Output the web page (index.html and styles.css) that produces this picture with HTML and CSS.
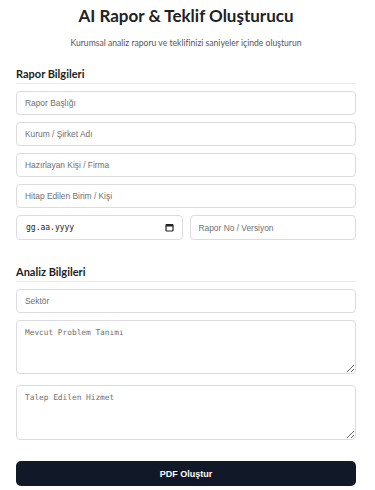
FILE: index.html
```html
<!DOCTYPE html>
<html lang="tr">
<head>
<meta charset="utf-8">
<title>AI Rapor &amp; Teklif Oluşturucu</title>
<link rel="stylesheet" href="styles.css">
</head>
<body>
<main class="page">
  <h1 class="title">AI Rapor &amp; Teklif Oluşturucu</h1>
  <p class="subtitle">Kurumsal analiz raporu ve teklifinizi saniyeler içinde oluşturun</p>

  <section class="section section-first">
    <h2 class="section-title">Rapor Bilgileri</h2>
    <div class="fields">
      <input class="field" type="text" placeholder="Rapor Başlığı">
      <input class="field" type="text" placeholder="Kurum / Şirket Adı">
      <input class="field" type="text" placeholder="Hazırlayan Kişi / Firma">
      <input class="field" type="text" placeholder="Hitap Edilen Birim / Kişi">
      <div class="row">
        <div class="field date-field">
          <span class="date-text">gg.aa.yyyy</span>
          <svg class="cal" width="9" height="9" viewBox="0 0 9 9"><rect x="1" y="1.5" width="7" height="6.5" rx="0.8" fill="none" stroke="#222" stroke-width="1.2"/><rect x="1" y="1.5" width="7" height="2" fill="#222"/></svg>
        </div>
        <input class="field" type="text" placeholder="Rapor No / Versiyon">
      </div>
    </div>
  </section>

  <section class="section section-second">
    <h2 class="section-title">Analiz Bilgileri</h2>
    <div class="fields">
      <input class="field" type="text" placeholder="Sektör">
      <textarea class="field area" placeholder="Mevcut Problem Tanımı"></textarea>
      <textarea class="field area area-second" placeholder="Talep Edilen Hizmet"></textarea>
    </div>
  </section>

  <button class="submit" type="button">PDF Oluştur</button>
</main>
</body>
</html>
```

FILE: styles.css
```css
* { box-sizing: border-box; }
html, body { margin: 0; padding: 0; background: #ffffff; }
body { font-family: Lato, "Open Sans", sans-serif; color: #222; }

.page {
  width: 340px;
  margin-left: 16px;
  display: flex;
  flex-direction: column;
}

.title {
  margin: 4px 0 0;
  font-family: Lato, "Open Sans", sans-serif;
  font-size: 17px;
  line-height: 24px;
  font-weight: 700;
  text-align: center;
  color: #222;
}

.subtitle {
  margin: 8px 0 0;
  font-family: Lato, "Open Sans", sans-serif;
  font-size: 8.6px;
  line-height: 14px;
  text-align: center;
  color: #555;
}

.section-first { margin-top: 17px; }
.section-second { margin-top: 25px; }

.section-title {
  margin: 0;
  font-family: Lato, "Open Sans", sans-serif;
  font-size: 11px;
  line-height: 14px;
  font-weight: 700;
  color: #222;
  padding-bottom: 2px;
  border-bottom: 1px solid #eaeaea;
}

.fields {
  margin-top: 7px;
  display: flex;
  flex-direction: column;
  gap: 7px;
}

.field {
  display: block;
  width: 100%;
  height: 24px;
  margin: 0;
  padding: 0 8px;
  border: 1px solid #dcdcdf;
  border-radius: 4px;
  background: #fff;
  font-family: "Liberation Sans", Arial, sans-serif;
  font-size: 8.4px;
  color: #222;
  outline: none;
}
.field::placeholder { color: #707070; }

.row {
  display: grid;
  grid-template-columns: 1fr 1fr;
  gap: 7px;
}
.row .field { height: 25px; }

.date-field {
  display: flex;
  align-items: center;
  justify-content: space-between;
  padding: 0 8px 0 9px;
}
.date-text {
  font-family: "DejaVu Sans Mono", monospace;
  font-size: 8px;
  color: #222;
}
.cal { display: block; }

.area {
  height: 54px;
  padding: 6px 8px;
  resize: vertical;
  font-family: "DejaVu Sans Mono", monospace;
  font-size: 7.8px;
  line-height: 11px;
}
.area-second { margin-top: 4px; height: 55px; }

.submit {
  margin-top: 21px;
  height: 25px;
  width: 100%;
  border: none;
  border-radius: 5px;
  background: #111827;
  color: #fff;
  font-family: "Liberation Sans", Arial, sans-serif;
  font-size: 9px;
  font-weight: 700;
}
```
